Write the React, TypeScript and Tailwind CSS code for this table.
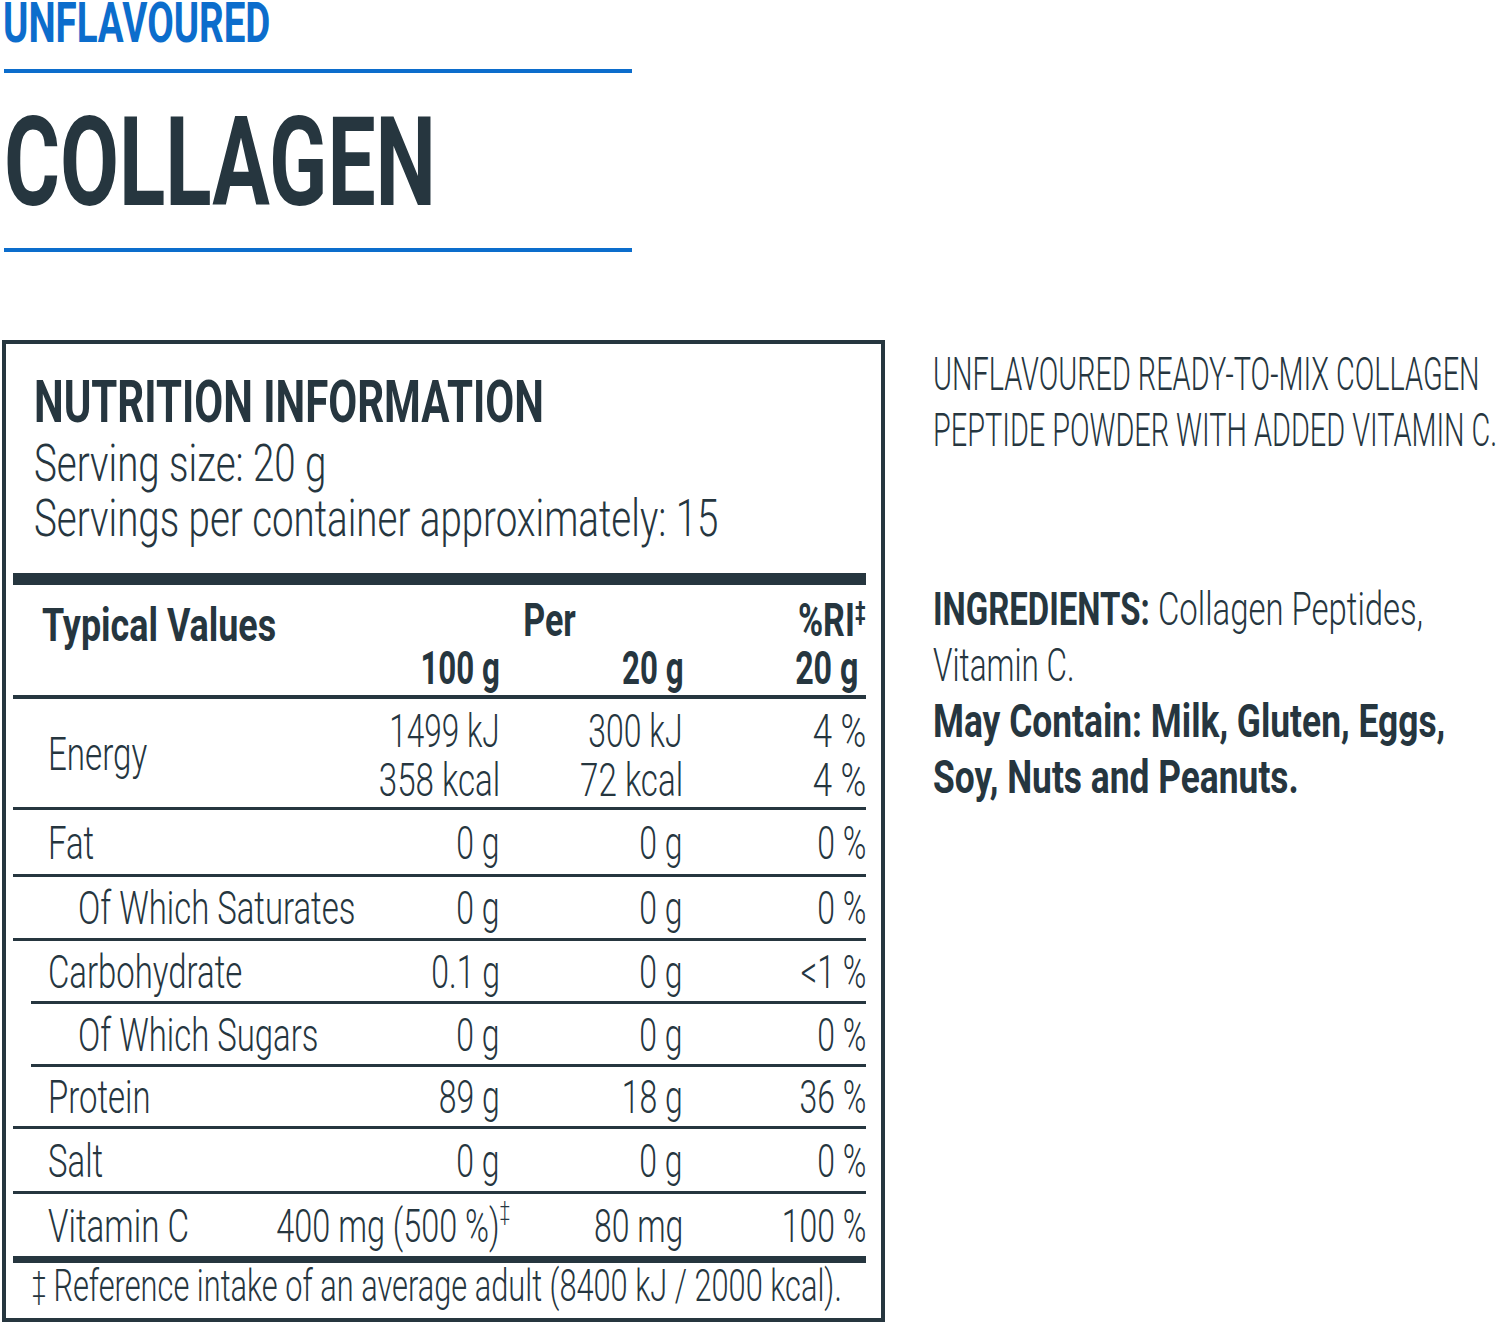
import type { ReactNode } from 'react';

// squeezed text: the label uses a narrow condensed face, so we compress a regular one
function Sq({ children, className = '' }: { children: ReactNode; className?: string }) {
  return <span className={`inline-block shrink-0 whitespace-nowrap ${className}`}>{children}</span>;
}

type Row = {
  label: string;
  sub?: boolean;
  a: string;
  b: string;
  c: string;
  h: string;
  line: 'full' | 'indent';
};

const rows: Row[] = [
  { label: 'Fat', a: '0 g', b: '0 g', c: '0 %', h: 'h-[64px]', line: 'full' },
  { label: 'Of Which Saturates', sub: true, a: '0 g', b: '0 g', c: '0 %', h: 'h-[61px]', line: 'full' },
  { label: 'Carbohydrate', a: '0.1 g', b: '0 g', c: '<1 %', h: 'h-[60px]', line: 'indent' },
  { label: 'Of Which Sugars', sub: true, a: '0 g', b: '0 g', c: '0 %', h: 'h-[60px]', line: 'indent' },
  { label: 'Protein', a: '89 g', b: '18 g', c: '36 %', h: 'h-[59px]', line: 'full' },
  { label: 'Salt', a: '0 g', b: '0 g', c: '0 %', h: 'h-[62px]', line: 'full' },
];

const cols = 'grid grid-cols-[307px_180px_183px_183px]';

function Value({ children }: { children: ReactNode }) {
  return (
    <div className="flex items-center justify-end">
      <Sq className="origin-right scale-x-[0.68]">{children}</Sq>
    </div>
  );
}

export default function App() {
  return (
    <div className="flex h-[1327px] w-[1500px] overflow-hidden bg-white font-[Roboto,sans-serif] text-[#26363f]">
      {/* left: title + nutrition panel */}
      <div className="w-[886px] shrink-0 pl-[2px]">
        <div className="pl-[1px] text-[55px] font-bold leading-[46px] text-[#0c6dcc]">
          <Sq className="origin-left scale-x-[0.7]">UNFLAVOURED</Sq>
        </div>
        <div className="ml-[2px] mt-[23px] h-[4px] w-[628px] bg-[#0c6dcc]" />
        <div className="mt-[28px] pl-[2px] text-[124px] font-bold leading-[124px]">
          <Sq className="origin-left scale-x-[0.69]">COLLAGEN</Sq>
        </div>
        <div className="ml-[2px] mt-[23px] h-[4px] w-[628px] bg-[#0c6dcc]" />

        <div className="mt-[88px] h-[982px] w-[883px] border-4 border-[#26363f] pl-[7px] pr-[15px] pt-[28px]">
          <div className="pl-[21px] text-[60px] font-bold leading-[60px]">
            <Sq className="origin-left scale-x-[0.7]">NUTRITION INFORMATION</Sq>
          </div>
          <div className="mt-[4px] pl-[21px] text-[52px] font-light leading-[55px]">
            <div>
              <Sq className="origin-left scale-x-[0.74]">Serving size: 20 g</Sq>
            </div>
            <div>
              <Sq className="origin-left scale-x-[0.74]">Servings per container approximately: 15</Sq>
            </div>
          </div>

          <div className="mt-[27px] h-[12px] bg-[#26363f]" />

          {/* column heads */}
          <div className="h-[114px] border-b-4 border-[#26363f] pt-[11px] text-[46px] font-bold leading-[48px]">
            <div className={cols}>
              <div className="row-span-2 pl-[29px] pt-[5px]">
                <Sq className="origin-left scale-x-[0.78]">Typical Values</Sq>
              </div>
              <div className="col-span-2 flex justify-center pl-[97px]">
                <Sq className="origin-center scale-x-[0.74]">Per</Sq>
              </div>
              <div className="flex justify-end">
                <Sq className="origin-right scale-x-[0.74]">
                  %RI<span className="align-top text-[26px] leading-[30px]">‡</span>
                </Sq>
              </div>
              <div className="flex justify-end">
                <Sq className="origin-right scale-x-[0.68]">100 g</Sq>
              </div>
              <div className="flex justify-end">
                <Sq className="origin-right scale-x-[0.68]">20 g</Sq>
              </div>
              <div className="flex justify-end pr-[8px]">
                <Sq className="origin-right scale-x-[0.7]">20 g</Sq>
              </div>
            </div>
          </div>

          <div className="text-[47px] font-light leading-none">
            {/* energy, two lines */}
            <div className={`${cols} h-[108px]`}>
              <div className="flex items-center pl-[35px]">
                <Sq className="origin-left scale-x-[0.705]">Energy</Sq>
              </div>
              <div className="flex flex-col items-end justify-center pt-[4px] leading-[49px]">
                <Sq className="origin-right scale-x-[0.67]">1499 kJ</Sq>
                <Sq className="origin-right scale-x-[0.705]">358 kcal</Sq>
              </div>
              <div className="flex flex-col items-end justify-center pt-[4px] leading-[49px]">
                <Sq className="origin-right scale-x-[0.68]">300 kJ</Sq>
                <Sq className="origin-right scale-x-[0.705]">72 kcal</Sq>
              </div>
              <div className="flex flex-col items-end justify-center pt-[4px] leading-[49px]">
                <Sq className="origin-right scale-x-[0.74]">4 %</Sq>
                <Sq className="origin-right scale-x-[0.74]">4 %</Sq>
              </div>
            </div>
            <div className="h-[3px] bg-[#26363f]" />

            {rows.map((r) => (
              <div key={r.label}>
                <div className={`${cols} ${r.h}`}>
                  <div className={`flex items-center ${r.sub ? 'pl-[65px]' : 'pl-[35px]'}`}>
                    <Sq className="origin-left scale-x-[0.7]">{r.label}</Sq>
                  </div>
                  <Value>{r.a}</Value>
                  <Value>{r.b}</Value>
                  <Value>{r.c}</Value>
                </div>
                <div className={`h-[3px] bg-[#26363f] ${r.line === 'indent' ? 'ml-[18px]' : ''}`} />
              </div>
            ))}

            <div className={`${cols} h-[62px]`}>
              <div className="flex items-center pl-[35px]">
                <Sq className="origin-left scale-x-[0.705]">Vitamin C</Sq>
              </div>
              <div className="flex items-center justify-end">
                <Sq className="relative origin-right scale-x-[0.69]">
                  400 mg (500 %)
                  <span className="absolute left-full top-[-4px] text-[26px]">‡</span>
                </Sq>
              </div>
              <Value>80 mg</Value>
              <Value>100 %</Value>
            </div>
          </div>

          <div className="h-[7px] bg-[#26363f]" />
          <div className="pl-[19px] text-[45px] font-light leading-[45px]">
            <Sq className="origin-left scale-x-[0.684]">
              <span className="relative top-[-4px] text-[36px]">‡</span> Reference intake of an average adult (8400 kJ /
              2000 kcal).
            </Sq>
          </div>
        </div>
      </div>

      {/* right: description + ingredients */}
      <div className="flex-1 pl-[47px] pt-[346px] text-[47px] leading-[56px]">
        <div className="font-light">
          <div>
            <Sq className="origin-left scale-x-[0.614]">UNFLAVOURED READY-TO-MIX COLLAGEN</Sq>
          </div>
          <div>
            <Sq className="origin-left scale-x-[0.614]">PEPTIDE POWDER WITH ADDED VITAMIN C.</Sq>
          </div>
        </div>
        <div className="mt-[123px]">
          <div>
            <Sq className="origin-left scale-x-[0.7]">
              <span className="font-bold">INGREDIENTS:</span> <span className="font-light">Collagen Peptides,</span>
            </Sq>
          </div>
          <div className="font-light">
            <Sq className="origin-left scale-x-[0.67]">Vitamin C.</Sq>
          </div>
          <div className="font-bold">
            <Sq className="origin-left scale-x-[0.752]">May Contain: Milk, Gluten, Eggs,</Sq>
          </div>
          <div className="font-bold">
            <Sq className="origin-left scale-x-[0.752]">Soy, Nuts and Peanuts.</Sq>
          </div>
        </div>
      </div>
    </div>
  );
}
